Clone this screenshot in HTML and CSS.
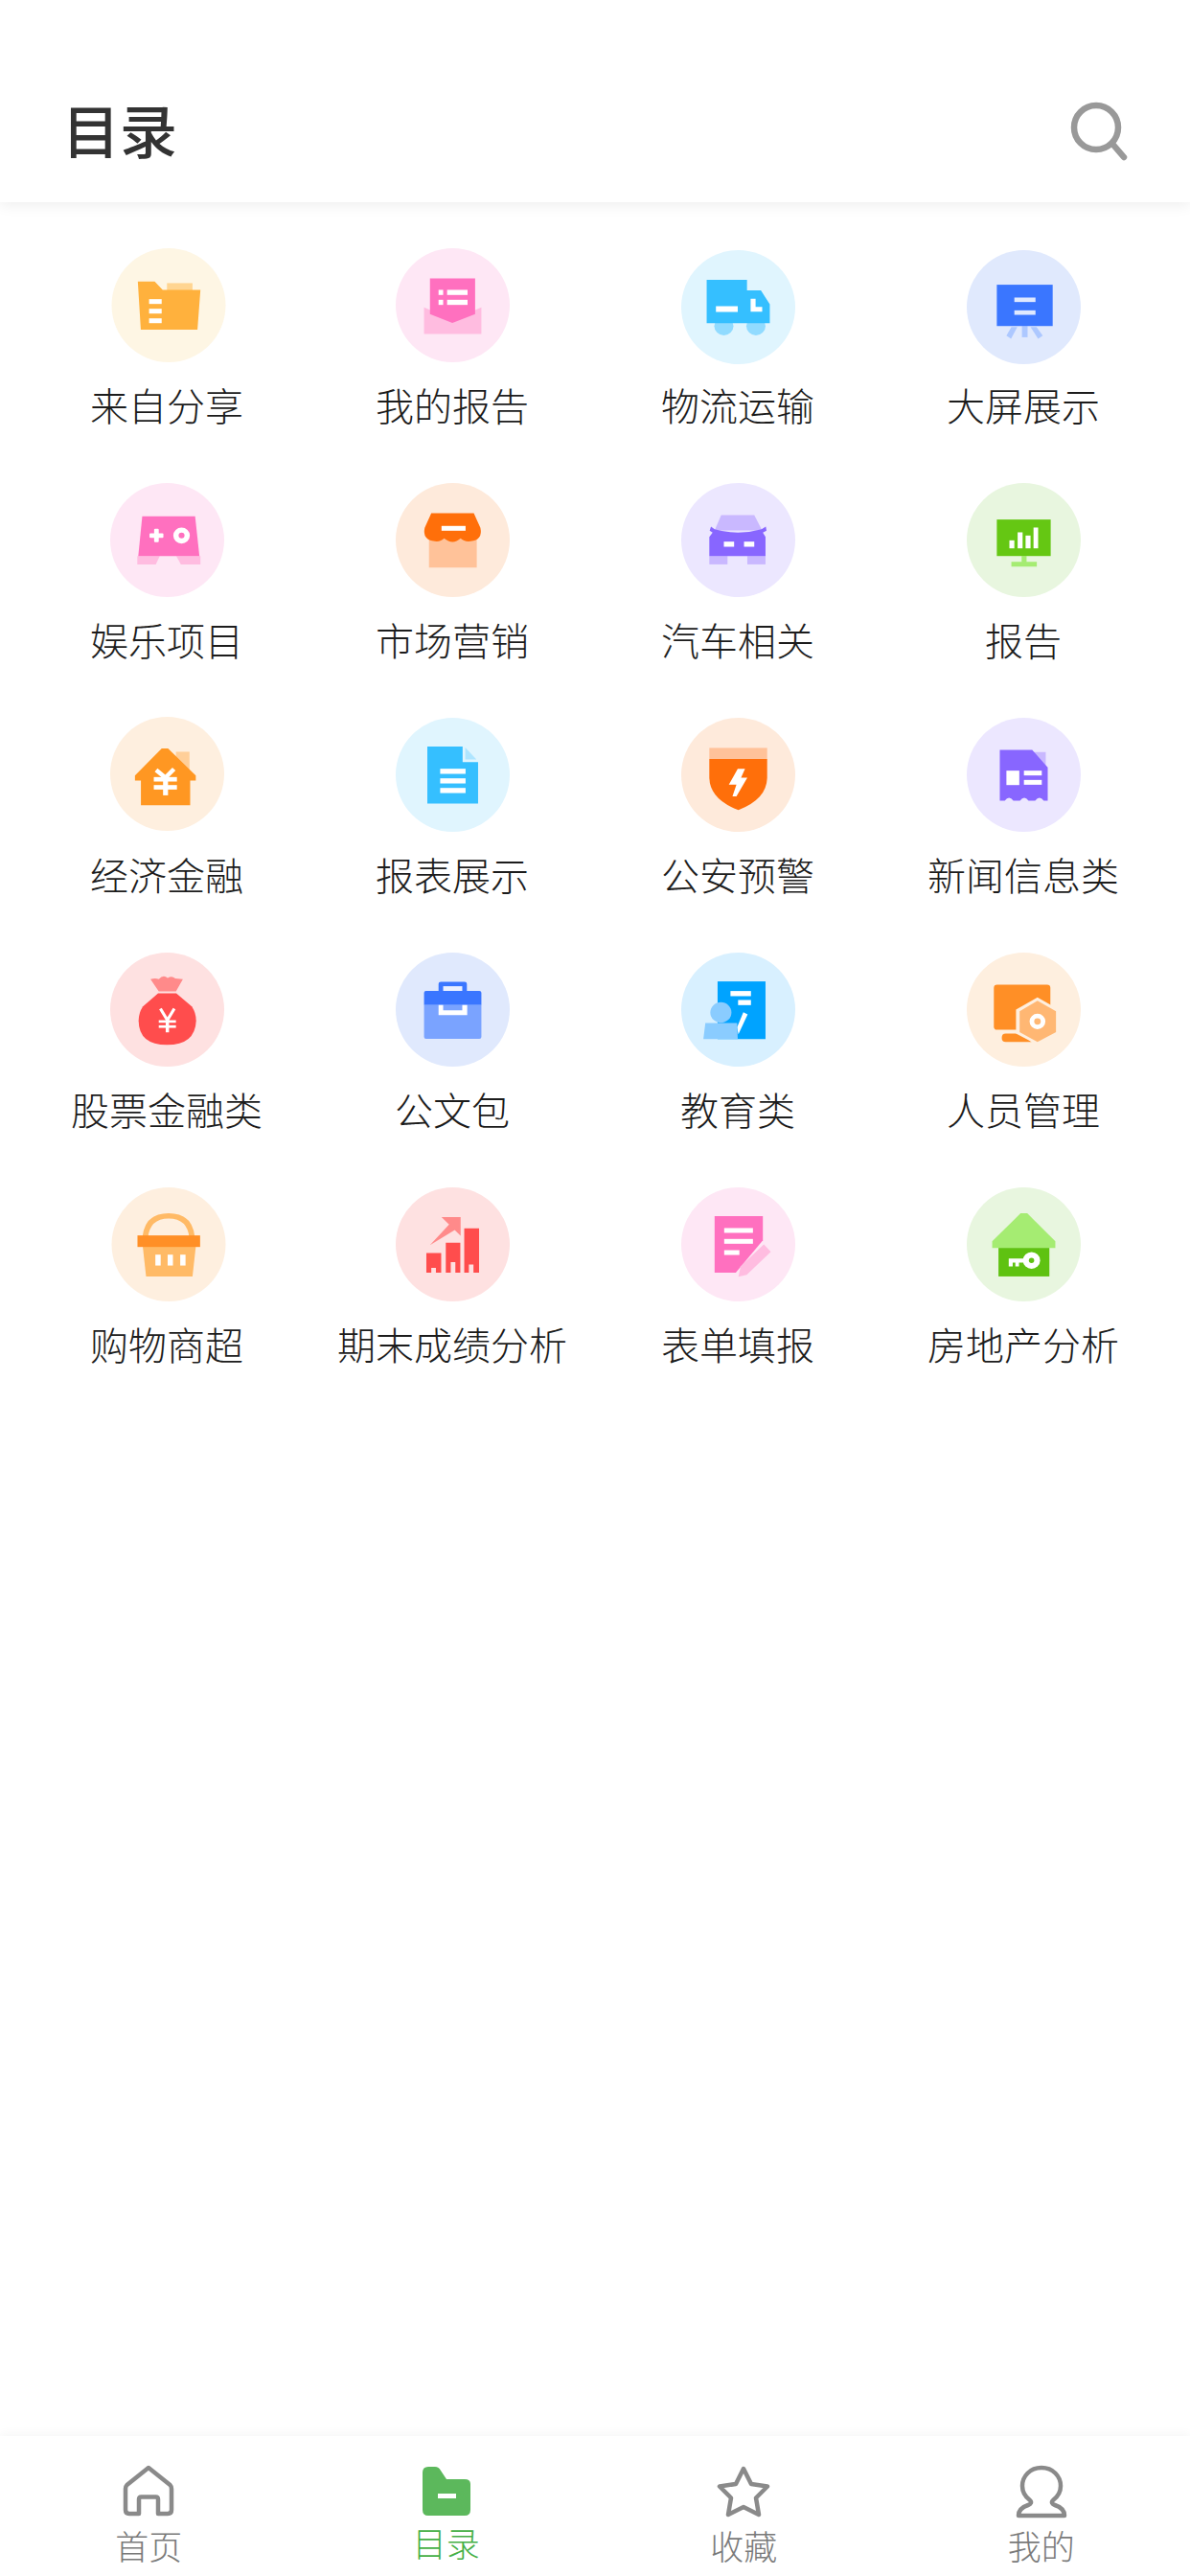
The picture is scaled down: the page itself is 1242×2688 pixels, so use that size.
FILE: index.html
```html
<!DOCTYPE html>
<html lang="zh-CN">
<head>
<meta charset="utf-8">
<title>目录</title>
<link rel="stylesheet" href="styles.css">
</head>
<body>
<div class="app">
  <header class="topbar">
    <h1 class="title">目录</h1>
    <svg class="search" viewBox="0 0 60 62" fill="none" stroke="#999" stroke-width="6.5"><circle cx="27" cy="27" r="23"/><path d="M44 44 L56 58" stroke-linecap="round"/></svg>
  </header>

  <main class="catalog">
    <div class="item">
      <div class="disc bg-amber nudge-r"><svg viewBox="163 57 344 356" preserveAspectRatio="none"><rect x="330" y="166" width="77" height="24" fill="#ffd591"/><polygon points="242,161 293,161 317,187 431,187 422,311 251,311" fill="#ffb13d"/><rect x="276" y="216" width="38" height="15" fill="#fff"/><rect x="276" y="246" width="38" height="15" fill="#fff"/><rect x="276" y="276" width="38" height="15" fill="#fff"/></svg></div>
      <span class="label">来自分享</span>
    </div>
    <div class="item">
      <div class="disc bg-pink"><svg viewBox="1023 57 346 356" preserveAspectRatio="none"><polygon points="1109,242 1196,280 1283,242 1283,325 1109,325" fill="#ffbce0"/><polygon points="1127,151 1264,151 1264,263 1195,290 1127,263" fill="#ff70bf"/><rect x="1153" y="187" width="14" height="16" fill="#fff"/><rect x="1179" y="187" width="62" height="16" fill="#fff"/><rect x="1153" y="218" width="14" height="16" fill="#fff"/><rect x="1179" y="218" width="62" height="16" fill="#fff"/></svg></div>
      <span class="label">我的报告</span>
    </div>
    <div class="item">
      <div class="disc bg-sky nudge-d"><svg viewBox="147 63 345 356" preserveAspectRatio="none"><circle cx="276" cy="300" r="29" fill="#91dbff"/><circle cx="373" cy="300" r="29" fill="#91dbff"/><polygon points="224,156 346,156 346,189 388,189 415,232 415,291 224,291" fill="#35bfff"/><rect x="252" y="238" width="66" height="18" fill="#fff"/><polygon points="357,215 372,215 372,240 392,240 392,255 357,255" fill="#fff"/></svg></div>
      <span class="label">物流运输</span>
    </div>
    <div class="item">
      <div class="disc bg-blue nudge-d"><svg viewBox="1012 63 345 356" preserveAspectRatio="none"><rect x="1179" y="300" width="17" height="35" fill="#adc8ff"/><polygon points="1147,303 1165,303 1146,340 1132,330" fill="#adc8ff"/><polygon points="1205,303 1223,303 1242,330 1228,340" fill="#adc8ff"/><rect x="1103" y="171" width="169" height="129" fill="#3a76ff"/><rect x="1156" y="211" width="64" height="14" fill="#dfe9ff"/><rect x="1156" y="251" width="64" height="14" fill="#dfe9ff"/></svg></div>
      <span class="label">大屏展示</span>
    </div>

    <div class="item">
      <div class="disc bg-pink"><svg viewBox="158 57 345 356" preserveAspectRatio="none"><polygon points="240,285 308,285 296,311 240,311" fill="#ffbce0"/><polygon points="431,285 358,285 372,311 431,311" fill="#ffbce0"/><polygon points="255,161 415,161 428,285 243,285" fill="#ff70bf"/><rect x="277" y="214" width="42" height="14" rx="3" fill="#fff"/><rect x="291" y="200" width="14" height="42" rx="3" fill="#fff"/><circle cx="374" cy="221" r="17" fill="none" stroke="#fff" stroke-width="16"/></svg></div>
      <span class="label">娱乐项目</span>
    </div>
    <div class="item">
      <div class="disc bg-peach"><svg viewBox="1023 57 346 356" preserveAspectRatio="none"><rect x="1124" y="225" width="145" height="96" fill="#ffc299"/><path d="M1131 151 H1260 L1280 197 Q1288 235 1250 239 Q1230 241 1220 230 Q1196 252 1170 230 Q1160 241 1142 239 Q1103 235 1111 197 Z" fill="#ff6f0a"/><rect x="1162" y="191" width="73" height="15" fill="#fff"/></svg></div>
      <span class="label">市场营销</span>
    </div>
    <div class="item">
      <div class="disc bg-violet"><svg viewBox="147 57 345 356" preserveAspectRatio="none"><polygon points="268,157 368,157 392,205 248,205" fill="#c9b8ff"/><rect x="232" y="285" width="55" height="26" fill="#c9b8ff"/><rect x="347" y="285" width="55" height="26" fill="#c9b8ff"/><path d="M237 193 L248 201 Q318 222 390 201 L403 193 L405 206 L394 212 L402 225 V285 H232 V225 L242 212 L233 206 Z" fill="#8866ff"/><rect x="276" y="240" width="31" height="16" fill="#fff"/><rect x="337" y="240" width="31" height="16" fill="#fff"/></svg></div>
      <span class="label">汽车相关</span>
    </div>
    <div class="item">
      <div class="disc bg-green"><svg viewBox="1012 57 345 356" preserveAspectRatio="none"><rect x="1178" y="285" width="15" height="20" fill="#a5ec72"/><rect x="1147" y="303" width="77" height="15" fill="#a5ec72"/><rect x="1103" y="171" width="163" height="114" fill="#65c713"/><rect x="1141" y="236" width="15" height="25" fill="#fff"/><rect x="1166" y="211" width="15" height="50" fill="#fff"/><rect x="1190" y="221" width="15" height="40" fill="#fff"/><rect x="1214" y="196" width="14" height="65" fill="#fff"/></svg></div>
      <span class="label">报告</span>
    </div>

    <div class="item">
      <div class="disc bg-cream nudge-u"><svg viewBox="158 53 345 356" preserveAspectRatio="none"><rect x="357" y="162" width="41" height="60" fill="#ffcf99"/><polygon points="314,152 333,152 417,236 417,252 400,252 400,329 251,329 251,252 233,252 233,236" fill="#ff9722"/><rect x="290" y="241" width="70" height="14" fill="#fff"/><rect x="290" y="266" width="70" height="14" fill="#fff"/><rect x="318" y="245" width="15" height="53" fill="#fff"/><path d="M297 219 L325 243 L351 216" fill="none" stroke="#fff" stroke-width="13"/></svg></div>
      <span class="label">经济金融</span>
    </div>
    <div class="item">
      <div class="disc bg-sky"><svg viewBox="1023 57 346 356" preserveAspectRatio="none"><polygon points="1119,147 1226,147 1226,195 1273,195 1273,325 1119,325" fill="#35bfff"/><polygon points="1234,150 1268,187 1234,187" fill="#aee5ff"/><rect x="1158" y="216" width="77" height="16" fill="#fff"/><rect x="1158" y="246" width="77" height="16" fill="#fff"/><rect x="1158" y="276" width="77" height="16" fill="#fff"/></svg></div>
      <span class="label">报表展示</span>
    </div>
    <div class="item">
      <div class="disc bg-peach"><svg viewBox="147 57 345 356" preserveAspectRatio="none"><rect x="232" y="151" width="175" height="35" fill="#ffc299"/><path d="M232 186 H407 V245 Q405 312 320 345 Q234 312 232 245 Z" fill="#ff6f0a"/><polygon points="318,216 340,216 328,244 347,244 314,302 302,302 314,266 291,266" fill="#fff"/></svg></div>
      <span class="label">公安预警</span>
    </div>
    <div class="item">
      <div class="disc bg-violet"><svg viewBox="1012 57 345 356" preserveAspectRatio="none"><polygon points="1210,164 1251,164 1251,205" fill="#c9b8ff"/><path d="M1112 157 H1210 L1257 212 V316 H1245 Q1232 298 1219 316 H1199 Q1186 298 1173 316 H1153 Q1140 298 1127 316 H1112 Z" fill="#8866ff"/><rect x="1132" y="222" width="39" height="45" fill="#fff"/><rect x="1185" y="222" width="54" height="15" fill="#fff"/><rect x="1185" y="251" width="54" height="15" fill="#fff"/></svg></div>
      <span class="label">新闻信息类</span>
    </div>

    <div class="item">
      <div class="disc bg-rose"><svg viewBox="158 57 345 356" preserveAspectRatio="none"><path d="M280 140 Q295 135 305 140 Q318 125 332 136 Q345 128 355 138 L378 140 L357 178 H305 Z" fill="#ff8a8a"/><path d="M303 184 H358 L405 225 Q418 245 418 270 Q415 345 330 345 Q245 345 244 270 Q244 245 257 225 Z" fill="#ff4d4d"/><path d="M310 232 L331 268 L352 232" fill="none" stroke="#fff" stroke-width="9"/><rect x="305" y="268" width="52" height="8" fill="#fff"/><rect x="305" y="284" width="52" height="8" fill="#fff"/><rect x="326" y="266" width="10" height="40" fill="#fff"/></svg></div>
      <span class="label">股票金融类</span>
    </div>
    <div class="item">
      <div class="disc bg-blue"><svg viewBox="1023 57 346 356" preserveAspectRatio="none"><rect x="1153" y="148" width="86" height="40" rx="7" fill="#3a76ff"/><rect x="1167" y="162" width="58" height="16" fill="#eaf0ff"/><path d="M1115 177 H1277 Q1283 177 1283 183 V221 H1109 V183 Q1109 177 1115 177 Z" fill="#3a76ff"/><path d="M1109 221 H1283 V320 Q1283 326 1277 326 H1115 Q1109 326 1109 320 Z" fill="#7aa3ff"/><polygon points="1153,221 1167,221 1167,237 1225,237 1225,221 1240,221 1240,252 1153,252" fill="#fff"/></svg></div>
      <span class="label">公文包</span>
    </div>
    <div class="item">
      <div class="disc bg-azure"><svg viewBox="147 57 345 356" preserveAspectRatio="none"><rect x="257" y="147" width="145" height="180" fill="#00a3ff"/><rect x="296" y="177" width="62" height="16" fill="#fff"/><rect x="319" y="205" width="39" height="16" fill="#fff"/><polygon points="335,243 348,250 320,312 316,290" fill="#fff"/><circle cx="267" cy="244" r="32" fill="#8accff"/><polygon points="220,277 316,277 318,327 214,327" fill="#8accff"/></svg></div>
      <span class="label">教育类</span>
    </div>
    <div class="item">
      <div class="disc bg-cream"><svg viewBox="1012 57 345 356" preserveAspectRatio="none"><rect x="1094" y="157" width="171" height="141" rx="10" fill="#ff8f26"/><path d="M1130 310 H1175 L1208 336 H1130 Q1118 336 1118 323 Q1118 310 1130 310 Z" fill="#ff8f26"/><polygon points="1226,197 1291,235 1291,310 1226,345 1161,310 1161,235" fill="#feefdf"/><polygon points="1226,207 1282,240 1282,305 1226,336 1172,305 1172,240" fill="#ffb773"/><circle cx="1226" cy="272" r="17" fill="none" stroke="#fff" stroke-width="14"/></svg></div>
      <span class="label">人员管理</span>
    </div>

    <div class="item">
      <div class="disc bg-cream nudge-r"><svg viewBox="163 57 344 356" preserveAspectRatio="none"><path d="M264 215 Q270 146 335 146 Q400 146 406 215" fill="none" stroke="#ffba66" stroke-width="17"/><polygon points="257,242 417,242 407,335 267,335" fill="#ffba66"/><rect x="241" y="207" width="189" height="36" fill="#ff8f26"/><rect x="295" y="267" width="16" height="34" fill="#fff"/><rect x="332" y="267" width="16" height="34" fill="#fff"/><rect x="370" y="267" width="16" height="34" fill="#fff"/></svg></div>
      <span class="label">购物商超</span>
    </div>
    <div class="item">
      <div class="disc bg-rose"><svg viewBox="1023 57 346 356" preserveAspectRatio="none"><polygon points="1162,150 1220,150 1220,208 1202,190 1127,237 1185,173" fill="#ff8a8a"/><path d="M1116 262 H1161 V323 H1145 V308 H1131 V323 H1116 Z" fill="#ff4d4d"/><path d="M1175 230 H1219 V323 H1204 V290 H1190 V323 H1175 Z" fill="#ff4d4d"/><path d="M1231 185 H1276 V323 H1259 V298 H1245 V323 H1231 Z" fill="#ff4d4d"/></svg></div>
      <span class="label">期末成绩分析</span>
    </div>
    <div class="item">
      <div class="disc bg-pink"><svg viewBox="147 57 345 356" preserveAspectRatio="none"><polygon points="248,147 394,147 394,222 312,323 248,323" fill="#ff70bf"/><rect x="277" y="184" width="87" height="15" fill="#fff"/><rect x="277" y="218" width="87" height="15" fill="#fff"/><rect x="277" y="253" width="46" height="15" fill="#fff"/><polygon points="397,235 418,258 345,330 320,336 327,303" fill="#ffbce0"/></svg></div>
      <span class="label">表单填报</span>
    </div>
    <div class="item">
      <div class="disc bg-green"><svg viewBox="1012 57 345 356" preserveAspectRatio="none"><polygon points="1175,138 1195,138 1280,225 1280,246 1089,246 1089,225" fill="#a5ec72"/><rect x="1108" y="246" width="154" height="89" fill="#5fc211"/><circle cx="1208" cy="285" r="26" fill="#fff"/><circle cx="1208" cy="285" r="8" fill="#5fc211"/><path d="M1139 279 H1190 V292 H1170 V304 H1159 V292 H1151 V304 H1139 Z" fill="#fff"/></svg></div>
      <span class="label">房地产分析</span>
    </div>
  </main>

  <nav class="tabbar">
    <div class="tab">
      <svg class="tab-icon" viewBox="0 0 58 56" fill="none" stroke="#8a8a8a" stroke-width="4.5" stroke-linejoin="round"><path d="M6.5 21 L29 3 L51.5 21 Q53 22.5 53 25 V47 Q53 51 49 51 H39 V36 Q39 33.5 36.5 33.5 H21.5 Q19 33.5 19 36 V51 H9 Q5 51 5 47 V25 Q5 22.500 6.500 21 Z"/></svg>
      <span class="tab-label">首页</span>
    </div>
    <div class="tab tab-active">
      <svg class="tab-icon" viewBox="0 0 58 56"><path d="M4 8 Q4 2 10 2 H17 Q21 2 23 6 L29 15 H48 Q54 15 54 20 V47 Q54 53 48 53 H10 Q4 53 4 47 Z" fill="#5cb85c"/><rect x="20" y="30" width="19" height="5" fill="#fff"/></svg>
      <span class="tab-label">目录</span>
    </div>
    <div class="tab">
      <svg class="tab-icon" viewBox="0 0 58 56" fill="none" stroke="#8a8a8a" stroke-width="4.5" stroke-linejoin="round"><polygon points="29,4 37,20 54,22.500 42,34.500 45,52 29,44 13,52 16,34.500 4,22.500 21,20"/></svg>
      <span class="tab-label">收藏</span>
    </div>
    <div class="tab">
      <svg class="tab-icon" viewBox="0 0 58 56" fill="none" stroke="#8a8a8a" stroke-width="4.5" stroke-linejoin="round"><path d="M29 3 C41 3 49 12 49 22 C49 30 45 34 41 37 C39 39 40 41 43 42 C49 44 53 48 53 53 H5 C5 48 9 44 15 42 C18 41 19 39 17 37 C13 34 9 30 9 22 C9 12 17 3 29 3 Z"/></svg>
      <span class="tab-label">我的</span>
    </div>
  </nav>
</div>
</body>
</html>
```

FILE: styles.css
```css
* { box-sizing: border-box; }

html, body {
  margin: 0;
  padding: 0;
  background: #fff;
}

body {
  font-family: "Noto Sans CJK SC", "Noto Sans", sans-serif;
  color: #333;
}

.app {
  width: 1242px;
  height: 2688px;
  display: flex;
  flex-direction: column;
  overflow: hidden;
}

.topbar {
  height: 211px;
  padding: 106px 65px 0 65px;
  display: flex;
  justify-content: space-between;
  align-items: flex-start;
  background: #fff;
  box-shadow: 0 3px 14px rgba(0, 0, 0, 0.07);
}

.title {
  margin: 0;
  font-size: 60px;
  line-height: 56px;
  font-weight: 500;
  color: #333;
}

.search {
  width: 60px;
  height: 62px;
  display: block;
}

.catalog {
  flex: 1;
  padding: 48px 25px 0;
  display: grid;
  grid-template-columns: repeat(4, 298px);
  grid-auto-rows: 245px;
  align-content: start;
}

.item {
  display: flex;
  flex-direction: column;
  align-items: center;
}

.disc {
  width: 119px;
  height: 119px;
  border-radius: 50%;
  flex: none;
}

.disc svg {
  width: 100%;
  height: 100%;
  display: block;
}

.nudge-r { transform: translateX(1.5px); }
.nudge-d { transform: translateY(2px); }
.nudge-u { transform: translateY(-1px); }

.bg-amber  { background: #fef6e4; }
.bg-pink   { background: #fee7f5; }
.bg-sky    { background: #e0f5fe; }
.bg-blue   { background: #e0e9fd; }
.bg-peach  { background: #feeadb; }
.bg-violet { background: #ece7ff; }
.bg-green  { background: #e8f6df; }
.bg-cream  { background: #feefdf; }
.bg-rose   { background: #fee1e1; }
.bg-azure  { background: #d8f0ff; }

.label {
  margin-top: 16px;
  font-size: 40px;
  line-height: 56px;
  font-weight: 300;
  color: #1c1c1c;
  white-space: nowrap;
}

.tabbar {
  height: 146px;
  padding-top: 30px;
  display: flex;
  background: #fff;
  box-shadow: 0 -3px 9px rgba(0, 0, 0, 0.035);
}

.tab {
  flex: 1;
  display: flex;
  flex-direction: column;
  align-items: center;
  color: #7a7a7a;
}

.tab-icon {
  width: 58px;
  height: 56px;
  display: block;
}

.tab-label {
  margin-top: 6px;
  font-size: 35px;
  line-height: 44px;
  font-weight: 300;
}

.tab-active {
  color: #46b046;
}

.tab-active .tab-label {
  margin-top: 3px;
}
```
